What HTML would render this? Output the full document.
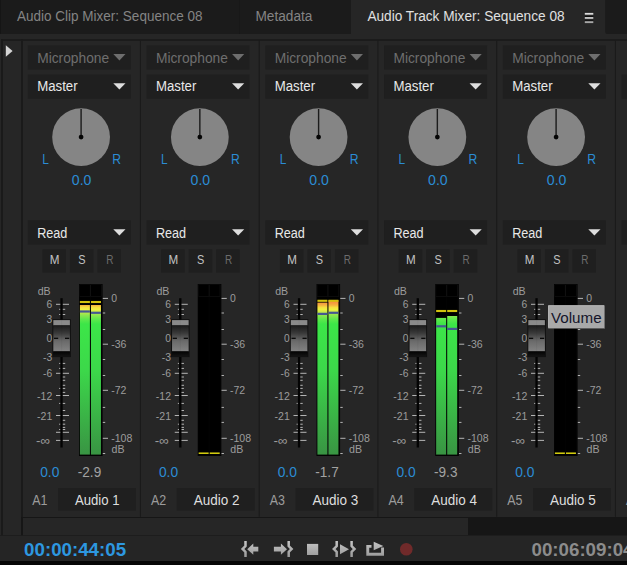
<!DOCTYPE html>
<html><head><meta charset="utf-8"><title>Audio Track Mixer</title>
<style>*{margin:0;padding:0}html,body{width:627px;height:565px;overflow:hidden;background:#262626}svg{display:block;position:absolute;left:0;top:0;font-family:"Liberation Sans",sans-serif}</style></head>
<body>
<svg width="627" height="565" viewBox="0 0 627 565">
<rect x="0" y="0" width="627" height="33.9" fill="#1b1b1b"/>
<rect x="351" y="0" width="258" height="34" fill="#262626"/>
<rect x="605.2" y="-4" width="30" height="37.9" fill="#1b1b1b" rx="2"/>
<rect x="239" y="0" width="1" height="33.9" fill="#181818"/>
<rect x="0" y="0" width="0.8" height="33.9" fill="#151515"/>
<text x="17" y="21" font-size="14" fill="#848484" textLength="185.5" lengthAdjust="spacingAndGlyphs">Audio Clip Mixer: Sequence 08</text>
<text x="255.4" y="21" font-size="14" fill="#848484" textLength="57" lengthAdjust="spacingAndGlyphs">Metadata</text>
<text x="367.4" y="21" font-size="14" fill="#e0e0e0" textLength="197.2" lengthAdjust="spacingAndGlyphs">Audio Track Mixer: Sequence 08</text>
<rect x="584.8" y="11.9" width="8.5" height="1" fill="#0c0c0c"/>
<rect x="584.8" y="12.8" width="8.5" height="1.9" fill="#dadada"/>
<rect x="584.8" y="16.1" width="8.5" height="1" fill="#0c0c0c"/>
<rect x="584.8" y="17" width="8.5" height="1.9" fill="#c0c0c0"/>
<rect x="584.8" y="20.3" width="8.5" height="1" fill="#0c0c0c"/>
<rect x="584.8" y="21.2" width="8.5" height="1.9" fill="#a6a6a6"/>
<rect x="1" y="39.2" width="626" height="1.6" fill="#1a1a1a"/>
<rect x="1" y="39.2" width="2" height="497" fill="#1a1a1a"/>
<rect x="21" y="39.2" width="2" height="497" fill="#1a1a1a"/>
<rect x="21" y="517" width="606" height="18.7" fill="#161616"/>
<rect x="23" y="518" width="445" height="17" fill="#262626"/>
<rect x="0" y="535" width="23" height="0.8" fill="#1a1a1a"/>
<rect x="0" y="535.7" width="627" height="25.5" fill="#252525"/>
<rect x="0" y="561" width="627" height="4" fill="#060606"/>
<path d="M5.8 45.2 L12.6 51 L5.8 56.8 Z" fill="#d4d4d4"/>
<defs>
<linearGradient id="mg" gradientUnits="userSpaceOnUse" x1="0" y1="298" x2="0" y2="455">
<stop offset="0.0000" stop-color="#f07a30"/><stop offset="0.0255" stop-color="#f59040"/><stop offset="0.0446" stop-color="#f5b040"/><stop offset="0.0605" stop-color="#f5e040"/><stop offset="0.0732" stop-color="#eef040"/><stop offset="0.0892" stop-color="#c8e848"/><stop offset="0.1083" stop-color="#90e850"/><stop offset="0.1338" stop-color="#60e84c"/><stop offset="0.1656" stop-color="#3ce648"/><stop offset="0.4586" stop-color="#3cd84a"/><stop offset="0.7771" stop-color="#3ab046"/><stop offset="1.0000" stop-color="#399443"/>
</linearGradient>
<linearGradient id="hg" x1="0" y1="0" x2="0" y2="1">
<stop offset="0" stop-color="#1a1a1a"/><stop offset="0.3" stop-color="#3a3a3a"/><stop offset="0.6" stop-color="#6a6a6a"/><stop offset="1" stop-color="#828282"/>
</linearGradient>
<linearGradient id="hb" x1="0" y1="0" x2="0" y2="1">
<stop offset="0" stop-color="#030303"/><stop offset="1" stop-color="#151515"/>
</linearGradient>
</defs>
<g transform="translate(0.0,0)">
<rect x="139.9" y="40.8" width="1.1" height="476" fill="#1a1a1a"/>
<rect x="27.8" y="45.4" width="103" height="24.2" fill="#1f1f1f"/>
<text x="37.2" y="62.8" font-size="14" fill="#6e6e6e" textLength="72" lengthAdjust="spacingAndGlyphs">Microphone</text>
<path d="M113.3 54 h12.2 l-6.1 6.4 Z" fill="#6e6e6e"/>
<rect x="27.8" y="74.6" width="103" height="24.1" fill="#1f1f1f"/>
<text x="37.2" y="90.8" font-size="14" fill="#e8e8e8" textLength="40.4" lengthAdjust="spacingAndGlyphs">Master</text>
<path d="M113.3 83.2 h12.2 l-6.1 6.4 Z" fill="#dedede"/>
<rect x="27.8" y="220.3" width="103" height="24.3" fill="#1f1f1f"/>
<text x="37.2" y="238" font-size="14" fill="#e8e8e8" textLength="30.2" lengthAdjust="spacingAndGlyphs">Read</text>
<path d="M113.3 229.2 h12.2 l-6.1 6.4 Z" fill="#dedede"/>
<circle cx="81.1" cy="137.1" r="28.9" fill="#858585"/>
<rect x="80.4" y="109" width="1.4" height="28" fill="#1c1c1c"/>
<circle cx="81.1" cy="137.1" r="2.4" fill="#050505"/>
<text x="42.2" y="164" font-size="14" fill="#2b8cd4" textLength="6.6" lengthAdjust="spacingAndGlyphs">L</text>
<text x="112.3" y="164" font-size="14" fill="#2b8cd4" textLength="8.8" lengthAdjust="spacingAndGlyphs">R</text>
<text x="71.8" y="184.8" font-size="14" fill="#2b8cd4" textLength="19.6" lengthAdjust="spacingAndGlyphs">0.0</text>
<rect x="42.4" y="249.3" width="23.6" height="23.3" fill="#1f1f1f"/>
<text x="49.8" y="264.1" font-size="12.6" fill="#c2c2c2" textLength="9.7" lengthAdjust="spacingAndGlyphs">M</text>
<rect x="69.9" y="249.3" width="23.6" height="23.3" fill="#1f1f1f"/>
<text x="78.2" y="264.1" font-size="12.6" fill="#c2c2c2" textLength="7.3" lengthAdjust="spacingAndGlyphs">S</text>
<rect x="97.4" y="249.3" width="23.6" height="23.3" fill="#1f1f1f"/>
<text x="106.2" y="264.1" font-size="12.6" fill="#6c6c6c" textLength="7.2" lengthAdjust="spacingAndGlyphs">R</text>
<text x="37.7" y="294.7" font-size="11" fill="#9c9c9c" textLength="13" lengthAdjust="spacingAndGlyphs">dB</text>
<rect x="60.4" y="298.2" width="2.3" height="149.3" fill="#030303"/>
<rect x="56" y="303.8" width="4.3" height="1" fill="#b4b4b4"/>
<rect x="62.8" y="303.8" width="6.2" height="1" fill="#b4b4b4"/>
<rect x="56" y="372.8" width="4.3" height="1" fill="#b4b4b4"/>
<rect x="62.8" y="372.8" width="6.2" height="1" fill="#b4b4b4"/>
<rect x="56" y="395" width="4.3" height="1" fill="#b4b4b4"/>
<rect x="62.8" y="395" width="6.2" height="1" fill="#b4b4b4"/>
<rect x="56" y="415" width="4.3" height="1" fill="#b4b4b4"/>
<rect x="62.8" y="415" width="6.2" height="1" fill="#b4b4b4"/>
<rect x="56" y="431.8" width="4.3" height="1" fill="#b4b4b4"/>
<rect x="62.8" y="431.8" width="6.2" height="1" fill="#b4b4b4"/>
<rect x="56" y="439.9" width="4.3" height="1" fill="#b4b4b4"/>
<rect x="62.8" y="439.9" width="6.2" height="1" fill="#b4b4b4"/>
<rect x="59.1" y="308.8" width="1.1" height="1" fill="#b4b4b4"/>
<rect x="62.8" y="308.8" width="2.4" height="1" fill="#b4b4b4"/>
<rect x="59.1" y="314" width="1.1" height="1" fill="#b4b4b4"/>
<rect x="62.8" y="314" width="2.4" height="1" fill="#b4b4b4"/>
<rect x="59.1" y="362.9" width="1.1" height="1" fill="#b4b4b4"/>
<rect x="62.8" y="362.9" width="2.4" height="1" fill="#b4b4b4"/>
<rect x="59.1" y="367.9" width="1.1" height="1" fill="#b4b4b4"/>
<rect x="62.8" y="367.9" width="2.4" height="1" fill="#b4b4b4"/>
<rect x="62.8" y="376.5" width="2.4" height="1" fill="#b4b4b4"/>
<rect x="62.8" y="379.8" width="2.4" height="1" fill="#b4b4b4"/>
<rect x="62.8" y="384.8" width="2.4" height="1" fill="#b4b4b4"/>
<rect x="59.1" y="387.9" width="1.1" height="1" fill="#b4b4b4"/>
<rect x="62.8" y="387.9" width="2.4" height="1" fill="#b4b4b4"/>
<rect x="62.8" y="391.9" width="2.4" height="1" fill="#b4b4b4"/>
<rect x="59.1" y="402.9" width="1.1" height="1" fill="#b4b4b4"/>
<rect x="62.8" y="402.9" width="2.4" height="1" fill="#b4b4b4"/>
<rect x="62.8" y="410" width="2.4" height="1" fill="#b4b4b4"/>
<rect x="62.8" y="419.8" width="2.4" height="1" fill="#b4b4b4"/>
<rect x="59.1" y="423.7" width="1.1" height="1" fill="#b4b4b4"/>
<rect x="62.8" y="423.7" width="2.4" height="1" fill="#b4b4b4"/>
<rect x="62.8" y="426.9" width="2.4" height="1" fill="#b4b4b4"/>
<rect x="59.1" y="429" width="1.1" height="1" fill="#b4b4b4"/>
<rect x="62.8" y="429" width="2.4" height="1" fill="#b4b4b4"/>
<text x="46.6" y="308.3" font-size="11" fill="#9c9c9c" textLength="5.7" lengthAdjust="spacingAndGlyphs">6</text>
<text x="46.6" y="323" font-size="11" fill="#9c9c9c" textLength="5.7" lengthAdjust="spacingAndGlyphs">3</text>
<text x="46.6" y="342.3" font-size="11" fill="#9c9c9c" textLength="5.7" lengthAdjust="spacingAndGlyphs">0</text>
<text x="43.1" y="361" font-size="11" fill="#9c9c9c" textLength="9.2" lengthAdjust="spacingAndGlyphs">-3</text>
<text x="43.1" y="377.3" font-size="11" fill="#9c9c9c" textLength="9.2" lengthAdjust="spacingAndGlyphs">-6</text>
<text x="37.1" y="399.5" font-size="11" fill="#9c9c9c" textLength="15.2" lengthAdjust="spacingAndGlyphs">-12</text>
<text x="37.1" y="419.5" font-size="11" fill="#9c9c9c" textLength="15.2" lengthAdjust="spacingAndGlyphs">-21</text>
<text x="36" y="444.6" font-size="13" fill="#9c9c9c" textLength="14" lengthAdjust="spacingAndGlyphs">-∞</text>
<rect x="52.4" y="319.3" width="18.4" height="37.8" fill="#0e0e0e"/>
<rect x="53.3" y="320.1" width="16.6" height="5.3" fill="#8a8a8a"/>
<rect x="53.3" y="325.4" width="16.6" height="26" fill="url(#hg)"/>
<rect x="53.3" y="351.4" width="16.6" height="5.2" fill="url(#hb)"/>
<rect x="61.1" y="320.1" width="1" height="31.3" fill="rgba(0,0,0,0.045)"/>
<rect x="54" y="337.7" width="4.2" height="1.2" fill="#000"/>
<rect x="65" y="337.7" width="4.2" height="1.2" fill="#000"/>
<rect x="79" y="284" width="23.6" height="172" fill="#030303"/>
<rect x="79.6" y="284.6" width="22" height="12" fill="#111111"/>
<rect x="79.9" y="285" width="10" height="11" fill="#000"/>
<rect x="79.9" y="297" width="10" height="157.6" fill="#000"/>
<rect x="79.9" y="305" width="10" height="149.6" fill="url(#mg)"/>
<rect x="79.9" y="300.95" width="10" height="2.1" fill="#d2c20e"/>
<rect x="79.9" y="310.4" width="10" height="2.2" fill="#465892"/>
<rect x="90.95" y="285" width="10" height="11" fill="#000"/>
<rect x="90.95" y="297" width="10" height="157.6" fill="#000"/>
<rect x="90.95" y="305" width="10" height="149.6" fill="url(#mg)"/>
<rect x="90.95" y="300.95" width="10" height="2.1" fill="#d2c20e"/>
<rect x="90.95" y="311.7" width="10" height="2.2" fill="#465892"/>
<rect x="102.8" y="297.9" width="5.2" height="1" fill="#b4b4b4"/>
<text x="111.2" y="302.4" font-size="11" fill="#9c9c9c" textLength="5.8" lengthAdjust="spacingAndGlyphs">0</text>
<rect x="102.8" y="343.7" width="5.2" height="1" fill="#b4b4b4"/>
<text x="111.2" y="348.2" font-size="11" fill="#9c9c9c" textLength="15.2" lengthAdjust="spacingAndGlyphs">-36</text>
<rect x="102.8" y="389.8" width="5.2" height="1" fill="#b4b4b4"/>
<text x="111.2" y="394.3" font-size="11" fill="#9c9c9c" textLength="15.2" lengthAdjust="spacingAndGlyphs">-72</text>
<rect x="102.8" y="437.8" width="5.2" height="1" fill="#b4b4b4"/>
<text x="111.2" y="442.3" font-size="11" fill="#9c9c9c" textLength="21.2" lengthAdjust="spacingAndGlyphs">-108</text>
<rect x="102.8" y="312.5" width="2.4" height="1" fill="#b4b4b4"/>
<rect x="102.8" y="329" width="2.4" height="1" fill="#b4b4b4"/>
<rect x="102.8" y="359" width="2.4" height="1" fill="#b4b4b4"/>
<rect x="102.8" y="375" width="2.4" height="1" fill="#b4b4b4"/>
<rect x="102.8" y="406.9" width="2.4" height="1" fill="#b4b4b4"/>
<rect x="102.8" y="421.9" width="2.4" height="1" fill="#b4b4b4"/>
<rect x="102.8" y="453" width="2.4" height="1" fill="#b4b4b4"/>
<text x="111.5" y="453" font-size="11" fill="#9c9c9c" textLength="13" lengthAdjust="spacingAndGlyphs">dB</text>
<text x="40.2" y="477.1" font-size="14" fill="#2b8cd4" textLength="19.2" lengthAdjust="spacingAndGlyphs">0.0</text>
<text x="77.8" y="477.1" font-size="14" fill="#a2a2a2" textLength="23.4" lengthAdjust="spacingAndGlyphs">-2.9</text>
<text x="32.3" y="504.9" font-size="14" fill="#9c9c9c" textLength="15.2" lengthAdjust="spacingAndGlyphs">A1</text>
<rect x="58" y="488" width="78" height="22.6" fill="#1f1f1f"/>
<text x="74.9" y="504.9" font-size="14" fill="#dedede" textLength="44.7" lengthAdjust="spacingAndGlyphs">Audio 1</text>
</g>
<g transform="translate(118.75,0)">
<rect x="139.9" y="40.8" width="1.1" height="476" fill="#1a1a1a"/>
<rect x="27.8" y="45.4" width="103" height="24.2" fill="#1f1f1f"/>
<text x="37.2" y="62.8" font-size="14" fill="#6e6e6e" textLength="72" lengthAdjust="spacingAndGlyphs">Microphone</text>
<path d="M113.3 54 h12.2 l-6.1 6.4 Z" fill="#6e6e6e"/>
<rect x="27.8" y="74.6" width="103" height="24.1" fill="#1f1f1f"/>
<text x="37.2" y="90.8" font-size="14" fill="#e8e8e8" textLength="40.4" lengthAdjust="spacingAndGlyphs">Master</text>
<path d="M113.3 83.2 h12.2 l-6.1 6.4 Z" fill="#dedede"/>
<rect x="27.8" y="220.3" width="103" height="24.3" fill="#1f1f1f"/>
<text x="37.2" y="238" font-size="14" fill="#e8e8e8" textLength="30.2" lengthAdjust="spacingAndGlyphs">Read</text>
<path d="M113.3 229.2 h12.2 l-6.1 6.4 Z" fill="#dedede"/>
<circle cx="81.1" cy="137.1" r="28.9" fill="#858585"/>
<rect x="80.4" y="109" width="1.4" height="28" fill="#1c1c1c"/>
<circle cx="81.1" cy="137.1" r="2.4" fill="#050505"/>
<text x="42.2" y="164" font-size="14" fill="#2b8cd4" textLength="6.6" lengthAdjust="spacingAndGlyphs">L</text>
<text x="112.3" y="164" font-size="14" fill="#2b8cd4" textLength="8.8" lengthAdjust="spacingAndGlyphs">R</text>
<text x="71.8" y="184.8" font-size="14" fill="#2b8cd4" textLength="19.6" lengthAdjust="spacingAndGlyphs">0.0</text>
<rect x="42.4" y="249.3" width="23.6" height="23.3" fill="#1f1f1f"/>
<text x="49.8" y="264.1" font-size="12.6" fill="#c2c2c2" textLength="9.7" lengthAdjust="spacingAndGlyphs">M</text>
<rect x="69.9" y="249.3" width="23.6" height="23.3" fill="#1f1f1f"/>
<text x="78.2" y="264.1" font-size="12.6" fill="#c2c2c2" textLength="7.3" lengthAdjust="spacingAndGlyphs">S</text>
<rect x="97.4" y="249.3" width="23.6" height="23.3" fill="#1f1f1f"/>
<text x="106.2" y="264.1" font-size="12.6" fill="#6c6c6c" textLength="7.2" lengthAdjust="spacingAndGlyphs">R</text>
<text x="37.7" y="294.7" font-size="11" fill="#9c9c9c" textLength="13" lengthAdjust="spacingAndGlyphs">dB</text>
<rect x="60.4" y="298.2" width="2.3" height="149.3" fill="#030303"/>
<rect x="56" y="303.8" width="4.3" height="1" fill="#b4b4b4"/>
<rect x="62.8" y="303.8" width="6.2" height="1" fill="#b4b4b4"/>
<rect x="56" y="372.8" width="4.3" height="1" fill="#b4b4b4"/>
<rect x="62.8" y="372.8" width="6.2" height="1" fill="#b4b4b4"/>
<rect x="56" y="395" width="4.3" height="1" fill="#b4b4b4"/>
<rect x="62.8" y="395" width="6.2" height="1" fill="#b4b4b4"/>
<rect x="56" y="415" width="4.3" height="1" fill="#b4b4b4"/>
<rect x="62.8" y="415" width="6.2" height="1" fill="#b4b4b4"/>
<rect x="56" y="431.8" width="4.3" height="1" fill="#b4b4b4"/>
<rect x="62.8" y="431.8" width="6.2" height="1" fill="#b4b4b4"/>
<rect x="56" y="439.9" width="4.3" height="1" fill="#b4b4b4"/>
<rect x="62.8" y="439.9" width="6.2" height="1" fill="#b4b4b4"/>
<rect x="59.1" y="308.8" width="1.1" height="1" fill="#b4b4b4"/>
<rect x="62.8" y="308.8" width="2.4" height="1" fill="#b4b4b4"/>
<rect x="59.1" y="314" width="1.1" height="1" fill="#b4b4b4"/>
<rect x="62.8" y="314" width="2.4" height="1" fill="#b4b4b4"/>
<rect x="59.1" y="362.9" width="1.1" height="1" fill="#b4b4b4"/>
<rect x="62.8" y="362.9" width="2.4" height="1" fill="#b4b4b4"/>
<rect x="59.1" y="367.9" width="1.1" height="1" fill="#b4b4b4"/>
<rect x="62.8" y="367.9" width="2.4" height="1" fill="#b4b4b4"/>
<rect x="62.8" y="376.5" width="2.4" height="1" fill="#b4b4b4"/>
<rect x="62.8" y="379.8" width="2.4" height="1" fill="#b4b4b4"/>
<rect x="62.8" y="384.8" width="2.4" height="1" fill="#b4b4b4"/>
<rect x="59.1" y="387.9" width="1.1" height="1" fill="#b4b4b4"/>
<rect x="62.8" y="387.9" width="2.4" height="1" fill="#b4b4b4"/>
<rect x="62.8" y="391.9" width="2.4" height="1" fill="#b4b4b4"/>
<rect x="59.1" y="402.9" width="1.1" height="1" fill="#b4b4b4"/>
<rect x="62.8" y="402.9" width="2.4" height="1" fill="#b4b4b4"/>
<rect x="62.8" y="410" width="2.4" height="1" fill="#b4b4b4"/>
<rect x="62.8" y="419.8" width="2.4" height="1" fill="#b4b4b4"/>
<rect x="59.1" y="423.7" width="1.1" height="1" fill="#b4b4b4"/>
<rect x="62.8" y="423.7" width="2.4" height="1" fill="#b4b4b4"/>
<rect x="62.8" y="426.9" width="2.4" height="1" fill="#b4b4b4"/>
<rect x="59.1" y="429" width="1.1" height="1" fill="#b4b4b4"/>
<rect x="62.8" y="429" width="2.4" height="1" fill="#b4b4b4"/>
<text x="46.6" y="308.3" font-size="11" fill="#9c9c9c" textLength="5.7" lengthAdjust="spacingAndGlyphs">6</text>
<text x="46.6" y="323" font-size="11" fill="#9c9c9c" textLength="5.7" lengthAdjust="spacingAndGlyphs">3</text>
<text x="46.6" y="342.3" font-size="11" fill="#9c9c9c" textLength="5.7" lengthAdjust="spacingAndGlyphs">0</text>
<text x="43.1" y="361" font-size="11" fill="#9c9c9c" textLength="9.2" lengthAdjust="spacingAndGlyphs">-3</text>
<text x="43.1" y="377.3" font-size="11" fill="#9c9c9c" textLength="9.2" lengthAdjust="spacingAndGlyphs">-6</text>
<text x="37.1" y="399.5" font-size="11" fill="#9c9c9c" textLength="15.2" lengthAdjust="spacingAndGlyphs">-12</text>
<text x="37.1" y="419.5" font-size="11" fill="#9c9c9c" textLength="15.2" lengthAdjust="spacingAndGlyphs">-21</text>
<text x="36" y="444.6" font-size="13" fill="#9c9c9c" textLength="14" lengthAdjust="spacingAndGlyphs">-∞</text>
<rect x="52.4" y="319.3" width="18.4" height="37.8" fill="#0e0e0e"/>
<rect x="53.3" y="320.1" width="16.6" height="5.3" fill="#8a8a8a"/>
<rect x="53.3" y="325.4" width="16.6" height="26" fill="url(#hg)"/>
<rect x="53.3" y="351.4" width="16.6" height="5.2" fill="url(#hb)"/>
<rect x="61.1" y="320.1" width="1" height="31.3" fill="rgba(0,0,0,0.045)"/>
<rect x="54" y="337.7" width="4.2" height="1.2" fill="#000"/>
<rect x="65" y="337.7" width="4.2" height="1.2" fill="#000"/>
<rect x="79" y="284" width="23.6" height="172" fill="#030303"/>
<rect x="79.6" y="284.6" width="22" height="12" fill="#111111"/>
<rect x="79.9" y="285" width="10" height="11" fill="#000"/>
<rect x="79.9" y="297" width="10" height="157.6" fill="#000"/>
<rect x="79.9" y="452.5" width="10" height="1.4" fill="#e8e010"/>
<rect x="90.95" y="285" width="10" height="11" fill="#000"/>
<rect x="90.95" y="297" width="10" height="157.6" fill="#000"/>
<rect x="90.95" y="452.5" width="10" height="1.4" fill="#e8e010"/>
<rect x="102.8" y="297.9" width="5.2" height="1" fill="#b4b4b4"/>
<text x="111.2" y="302.4" font-size="11" fill="#9c9c9c" textLength="5.8" lengthAdjust="spacingAndGlyphs">0</text>
<rect x="102.8" y="343.7" width="5.2" height="1" fill="#b4b4b4"/>
<text x="111.2" y="348.2" font-size="11" fill="#9c9c9c" textLength="15.2" lengthAdjust="spacingAndGlyphs">-36</text>
<rect x="102.8" y="389.8" width="5.2" height="1" fill="#b4b4b4"/>
<text x="111.2" y="394.3" font-size="11" fill="#9c9c9c" textLength="15.2" lengthAdjust="spacingAndGlyphs">-72</text>
<rect x="102.8" y="437.8" width="5.2" height="1" fill="#b4b4b4"/>
<text x="111.2" y="442.3" font-size="11" fill="#9c9c9c" textLength="21.2" lengthAdjust="spacingAndGlyphs">-108</text>
<rect x="102.8" y="312.5" width="2.4" height="1" fill="#b4b4b4"/>
<rect x="102.8" y="329" width="2.4" height="1" fill="#b4b4b4"/>
<rect x="102.8" y="359" width="2.4" height="1" fill="#b4b4b4"/>
<rect x="102.8" y="375" width="2.4" height="1" fill="#b4b4b4"/>
<rect x="102.8" y="406.9" width="2.4" height="1" fill="#b4b4b4"/>
<rect x="102.8" y="421.9" width="2.4" height="1" fill="#b4b4b4"/>
<rect x="102.8" y="453" width="2.4" height="1" fill="#b4b4b4"/>
<text x="111.5" y="453" font-size="11" fill="#9c9c9c" textLength="13" lengthAdjust="spacingAndGlyphs">dB</text>
<text x="40.2" y="477.1" font-size="14" fill="#2b8cd4" textLength="19.2" lengthAdjust="spacingAndGlyphs">0.0</text>
<text x="32.3" y="504.9" font-size="14" fill="#9c9c9c" textLength="15.2" lengthAdjust="spacingAndGlyphs">A2</text>
<rect x="58" y="488" width="78" height="22.6" fill="#1f1f1f"/>
<text x="74.9" y="504.9" font-size="14" fill="#dedede" textLength="45.8" lengthAdjust="spacingAndGlyphs">Audio 2</text>
</g>
<g transform="translate(237.5,0)">
<rect x="139.9" y="40.8" width="1.1" height="476" fill="#1a1a1a"/>
<rect x="27.8" y="45.4" width="103" height="24.2" fill="#1f1f1f"/>
<text x="37.2" y="62.8" font-size="14" fill="#6e6e6e" textLength="72" lengthAdjust="spacingAndGlyphs">Microphone</text>
<path d="M113.3 54 h12.2 l-6.1 6.4 Z" fill="#6e6e6e"/>
<rect x="27.8" y="74.6" width="103" height="24.1" fill="#1f1f1f"/>
<text x="37.2" y="90.8" font-size="14" fill="#e8e8e8" textLength="40.4" lengthAdjust="spacingAndGlyphs">Master</text>
<path d="M113.3 83.2 h12.2 l-6.1 6.4 Z" fill="#dedede"/>
<rect x="27.8" y="220.3" width="103" height="24.3" fill="#1f1f1f"/>
<text x="37.2" y="238" font-size="14" fill="#e8e8e8" textLength="30.2" lengthAdjust="spacingAndGlyphs">Read</text>
<path d="M113.3 229.2 h12.2 l-6.1 6.4 Z" fill="#dedede"/>
<circle cx="81.1" cy="137.1" r="28.9" fill="#858585"/>
<rect x="80.4" y="109" width="1.4" height="28" fill="#1c1c1c"/>
<circle cx="81.1" cy="137.1" r="2.4" fill="#050505"/>
<text x="42.2" y="164" font-size="14" fill="#2b8cd4" textLength="6.6" lengthAdjust="spacingAndGlyphs">L</text>
<text x="112.3" y="164" font-size="14" fill="#2b8cd4" textLength="8.8" lengthAdjust="spacingAndGlyphs">R</text>
<text x="71.8" y="184.8" font-size="14" fill="#2b8cd4" textLength="19.6" lengthAdjust="spacingAndGlyphs">0.0</text>
<rect x="42.4" y="249.3" width="23.6" height="23.3" fill="#1f1f1f"/>
<text x="49.8" y="264.1" font-size="12.6" fill="#c2c2c2" textLength="9.7" lengthAdjust="spacingAndGlyphs">M</text>
<rect x="69.9" y="249.3" width="23.6" height="23.3" fill="#1f1f1f"/>
<text x="78.2" y="264.1" font-size="12.6" fill="#c2c2c2" textLength="7.3" lengthAdjust="spacingAndGlyphs">S</text>
<rect x="97.4" y="249.3" width="23.6" height="23.3" fill="#1f1f1f"/>
<text x="106.2" y="264.1" font-size="12.6" fill="#6c6c6c" textLength="7.2" lengthAdjust="spacingAndGlyphs">R</text>
<text x="37.7" y="294.7" font-size="11" fill="#9c9c9c" textLength="13" lengthAdjust="spacingAndGlyphs">dB</text>
<rect x="60.4" y="298.2" width="2.3" height="149.3" fill="#030303"/>
<rect x="56" y="303.8" width="4.3" height="1" fill="#b4b4b4"/>
<rect x="62.8" y="303.8" width="6.2" height="1" fill="#b4b4b4"/>
<rect x="56" y="372.8" width="4.3" height="1" fill="#b4b4b4"/>
<rect x="62.8" y="372.8" width="6.2" height="1" fill="#b4b4b4"/>
<rect x="56" y="395" width="4.3" height="1" fill="#b4b4b4"/>
<rect x="62.8" y="395" width="6.2" height="1" fill="#b4b4b4"/>
<rect x="56" y="415" width="4.3" height="1" fill="#b4b4b4"/>
<rect x="62.8" y="415" width="6.2" height="1" fill="#b4b4b4"/>
<rect x="56" y="431.8" width="4.3" height="1" fill="#b4b4b4"/>
<rect x="62.8" y="431.8" width="6.2" height="1" fill="#b4b4b4"/>
<rect x="56" y="439.9" width="4.3" height="1" fill="#b4b4b4"/>
<rect x="62.8" y="439.9" width="6.2" height="1" fill="#b4b4b4"/>
<rect x="59.1" y="308.8" width="1.1" height="1" fill="#b4b4b4"/>
<rect x="62.8" y="308.8" width="2.4" height="1" fill="#b4b4b4"/>
<rect x="59.1" y="314" width="1.1" height="1" fill="#b4b4b4"/>
<rect x="62.8" y="314" width="2.4" height="1" fill="#b4b4b4"/>
<rect x="59.1" y="362.9" width="1.1" height="1" fill="#b4b4b4"/>
<rect x="62.8" y="362.9" width="2.4" height="1" fill="#b4b4b4"/>
<rect x="59.1" y="367.9" width="1.1" height="1" fill="#b4b4b4"/>
<rect x="62.8" y="367.9" width="2.4" height="1" fill="#b4b4b4"/>
<rect x="62.8" y="376.5" width="2.4" height="1" fill="#b4b4b4"/>
<rect x="62.8" y="379.8" width="2.4" height="1" fill="#b4b4b4"/>
<rect x="62.8" y="384.8" width="2.4" height="1" fill="#b4b4b4"/>
<rect x="59.1" y="387.9" width="1.1" height="1" fill="#b4b4b4"/>
<rect x="62.8" y="387.9" width="2.4" height="1" fill="#b4b4b4"/>
<rect x="62.8" y="391.9" width="2.4" height="1" fill="#b4b4b4"/>
<rect x="59.1" y="402.9" width="1.1" height="1" fill="#b4b4b4"/>
<rect x="62.8" y="402.9" width="2.4" height="1" fill="#b4b4b4"/>
<rect x="62.8" y="410" width="2.4" height="1" fill="#b4b4b4"/>
<rect x="62.8" y="419.8" width="2.4" height="1" fill="#b4b4b4"/>
<rect x="59.1" y="423.7" width="1.1" height="1" fill="#b4b4b4"/>
<rect x="62.8" y="423.7" width="2.4" height="1" fill="#b4b4b4"/>
<rect x="62.8" y="426.9" width="2.4" height="1" fill="#b4b4b4"/>
<rect x="59.1" y="429" width="1.1" height="1" fill="#b4b4b4"/>
<rect x="62.8" y="429" width="2.4" height="1" fill="#b4b4b4"/>
<text x="46.6" y="308.3" font-size="11" fill="#9c9c9c" textLength="5.7" lengthAdjust="spacingAndGlyphs">6</text>
<text x="46.6" y="323" font-size="11" fill="#9c9c9c" textLength="5.7" lengthAdjust="spacingAndGlyphs">3</text>
<text x="46.6" y="342.3" font-size="11" fill="#9c9c9c" textLength="5.7" lengthAdjust="spacingAndGlyphs">0</text>
<text x="43.1" y="361" font-size="11" fill="#9c9c9c" textLength="9.2" lengthAdjust="spacingAndGlyphs">-3</text>
<text x="43.1" y="377.3" font-size="11" fill="#9c9c9c" textLength="9.2" lengthAdjust="spacingAndGlyphs">-6</text>
<text x="37.1" y="399.5" font-size="11" fill="#9c9c9c" textLength="15.2" lengthAdjust="spacingAndGlyphs">-12</text>
<text x="37.1" y="419.5" font-size="11" fill="#9c9c9c" textLength="15.2" lengthAdjust="spacingAndGlyphs">-21</text>
<text x="36" y="444.6" font-size="13" fill="#9c9c9c" textLength="14" lengthAdjust="spacingAndGlyphs">-∞</text>
<rect x="52.4" y="319.3" width="18.4" height="37.8" fill="#0e0e0e"/>
<rect x="53.3" y="320.1" width="16.6" height="5.3" fill="#8a8a8a"/>
<rect x="53.3" y="325.4" width="16.6" height="26" fill="url(#hg)"/>
<rect x="53.3" y="351.4" width="16.6" height="5.2" fill="url(#hb)"/>
<rect x="61.1" y="320.1" width="1" height="31.3" fill="rgba(0,0,0,0.045)"/>
<rect x="54" y="337.7" width="4.2" height="1.2" fill="#000"/>
<rect x="65" y="337.7" width="4.2" height="1.2" fill="#000"/>
<rect x="79" y="284" width="23.6" height="172" fill="#030303"/>
<rect x="79.6" y="284.6" width="22" height="12" fill="#111111"/>
<rect x="79.9" y="285" width="10" height="11" fill="#000"/>
<rect x="79.9" y="297" width="10" height="157.6" fill="#000"/>
<rect x="79.9" y="302.6" width="10" height="152" fill="url(#mg)"/>
<rect x="79.9" y="299.75" width="10" height="2.1" fill="#d2c20e"/>
<rect x="79.9" y="312.8" width="10" height="2.2" fill="#465892"/>
<rect x="90.95" y="285" width="10" height="11" fill="#000"/>
<rect x="90.95" y="297" width="10" height="157.6" fill="#000"/>
<rect x="90.95" y="300.2" width="10" height="154.4" fill="url(#mg)"/>
<rect x="90.95" y="299.75" width="10" height="2.1" fill="#d2c20e"/>
<rect x="90.95" y="311.7" width="10" height="2.2" fill="#465892"/>
<rect x="102.8" y="297.9" width="5.2" height="1" fill="#b4b4b4"/>
<text x="111.2" y="302.4" font-size="11" fill="#9c9c9c" textLength="5.8" lengthAdjust="spacingAndGlyphs">0</text>
<rect x="102.8" y="343.7" width="5.2" height="1" fill="#b4b4b4"/>
<text x="111.2" y="348.2" font-size="11" fill="#9c9c9c" textLength="15.2" lengthAdjust="spacingAndGlyphs">-36</text>
<rect x="102.8" y="389.8" width="5.2" height="1" fill="#b4b4b4"/>
<text x="111.2" y="394.3" font-size="11" fill="#9c9c9c" textLength="15.2" lengthAdjust="spacingAndGlyphs">-72</text>
<rect x="102.8" y="437.8" width="5.2" height="1" fill="#b4b4b4"/>
<text x="111.2" y="442.3" font-size="11" fill="#9c9c9c" textLength="21.2" lengthAdjust="spacingAndGlyphs">-108</text>
<rect x="102.8" y="312.5" width="2.4" height="1" fill="#b4b4b4"/>
<rect x="102.8" y="329" width="2.4" height="1" fill="#b4b4b4"/>
<rect x="102.8" y="359" width="2.4" height="1" fill="#b4b4b4"/>
<rect x="102.8" y="375" width="2.4" height="1" fill="#b4b4b4"/>
<rect x="102.8" y="406.9" width="2.4" height="1" fill="#b4b4b4"/>
<rect x="102.8" y="421.9" width="2.4" height="1" fill="#b4b4b4"/>
<rect x="102.8" y="453" width="2.4" height="1" fill="#b4b4b4"/>
<text x="111.5" y="453" font-size="11" fill="#9c9c9c" textLength="13" lengthAdjust="spacingAndGlyphs">dB</text>
<text x="40.2" y="477.1" font-size="14" fill="#2b8cd4" textLength="19.2" lengthAdjust="spacingAndGlyphs">0.0</text>
<text x="77.8" y="477.1" font-size="14" fill="#a2a2a2" textLength="23.4" lengthAdjust="spacingAndGlyphs">-1.7</text>
<text x="32.3" y="504.9" font-size="14" fill="#9c9c9c" textLength="15.2" lengthAdjust="spacingAndGlyphs">A3</text>
<rect x="58" y="488" width="78" height="22.6" fill="#1f1f1f"/>
<text x="74.9" y="504.9" font-size="14" fill="#dedede" textLength="45.8" lengthAdjust="spacingAndGlyphs">Audio 3</text>
</g>
<g transform="translate(356.25,0)">
<rect x="139.9" y="40.8" width="1.1" height="476" fill="#1a1a1a"/>
<rect x="27.8" y="45.4" width="103" height="24.2" fill="#1f1f1f"/>
<text x="37.2" y="62.8" font-size="14" fill="#6e6e6e" textLength="72" lengthAdjust="spacingAndGlyphs">Microphone</text>
<path d="M113.3 54 h12.2 l-6.1 6.4 Z" fill="#6e6e6e"/>
<rect x="27.8" y="74.6" width="103" height="24.1" fill="#1f1f1f"/>
<text x="37.2" y="90.8" font-size="14" fill="#e8e8e8" textLength="40.4" lengthAdjust="spacingAndGlyphs">Master</text>
<path d="M113.3 83.2 h12.2 l-6.1 6.4 Z" fill="#dedede"/>
<rect x="27.8" y="220.3" width="103" height="24.3" fill="#1f1f1f"/>
<text x="37.2" y="238" font-size="14" fill="#e8e8e8" textLength="30.2" lengthAdjust="spacingAndGlyphs">Read</text>
<path d="M113.3 229.2 h12.2 l-6.1 6.4 Z" fill="#dedede"/>
<circle cx="81.1" cy="137.1" r="28.9" fill="#858585"/>
<rect x="80.4" y="109" width="1.4" height="28" fill="#1c1c1c"/>
<circle cx="81.1" cy="137.1" r="2.4" fill="#050505"/>
<text x="42.2" y="164" font-size="14" fill="#2b8cd4" textLength="6.6" lengthAdjust="spacingAndGlyphs">L</text>
<text x="112.3" y="164" font-size="14" fill="#2b8cd4" textLength="8.8" lengthAdjust="spacingAndGlyphs">R</text>
<text x="71.8" y="184.8" font-size="14" fill="#2b8cd4" textLength="19.6" lengthAdjust="spacingAndGlyphs">0.0</text>
<rect x="42.4" y="249.3" width="23.6" height="23.3" fill="#1f1f1f"/>
<text x="49.8" y="264.1" font-size="12.6" fill="#c2c2c2" textLength="9.7" lengthAdjust="spacingAndGlyphs">M</text>
<rect x="69.9" y="249.3" width="23.6" height="23.3" fill="#1f1f1f"/>
<text x="78.2" y="264.1" font-size="12.6" fill="#c2c2c2" textLength="7.3" lengthAdjust="spacingAndGlyphs">S</text>
<rect x="97.4" y="249.3" width="23.6" height="23.3" fill="#1f1f1f"/>
<text x="106.2" y="264.1" font-size="12.6" fill="#6c6c6c" textLength="7.2" lengthAdjust="spacingAndGlyphs">R</text>
<text x="37.7" y="294.7" font-size="11" fill="#9c9c9c" textLength="13" lengthAdjust="spacingAndGlyphs">dB</text>
<rect x="60.4" y="298.2" width="2.3" height="149.3" fill="#030303"/>
<rect x="56" y="303.8" width="4.3" height="1" fill="#b4b4b4"/>
<rect x="62.8" y="303.8" width="6.2" height="1" fill="#b4b4b4"/>
<rect x="56" y="372.8" width="4.3" height="1" fill="#b4b4b4"/>
<rect x="62.8" y="372.8" width="6.2" height="1" fill="#b4b4b4"/>
<rect x="56" y="395" width="4.3" height="1" fill="#b4b4b4"/>
<rect x="62.8" y="395" width="6.2" height="1" fill="#b4b4b4"/>
<rect x="56" y="415" width="4.3" height="1" fill="#b4b4b4"/>
<rect x="62.8" y="415" width="6.2" height="1" fill="#b4b4b4"/>
<rect x="56" y="431.8" width="4.3" height="1" fill="#b4b4b4"/>
<rect x="62.8" y="431.8" width="6.2" height="1" fill="#b4b4b4"/>
<rect x="56" y="439.9" width="4.3" height="1" fill="#b4b4b4"/>
<rect x="62.8" y="439.9" width="6.2" height="1" fill="#b4b4b4"/>
<rect x="59.1" y="308.8" width="1.1" height="1" fill="#b4b4b4"/>
<rect x="62.8" y="308.8" width="2.4" height="1" fill="#b4b4b4"/>
<rect x="59.1" y="314" width="1.1" height="1" fill="#b4b4b4"/>
<rect x="62.8" y="314" width="2.4" height="1" fill="#b4b4b4"/>
<rect x="59.1" y="362.9" width="1.1" height="1" fill="#b4b4b4"/>
<rect x="62.8" y="362.9" width="2.4" height="1" fill="#b4b4b4"/>
<rect x="59.1" y="367.9" width="1.1" height="1" fill="#b4b4b4"/>
<rect x="62.8" y="367.9" width="2.4" height="1" fill="#b4b4b4"/>
<rect x="62.8" y="376.5" width="2.4" height="1" fill="#b4b4b4"/>
<rect x="62.8" y="379.8" width="2.4" height="1" fill="#b4b4b4"/>
<rect x="62.8" y="384.8" width="2.4" height="1" fill="#b4b4b4"/>
<rect x="59.1" y="387.9" width="1.1" height="1" fill="#b4b4b4"/>
<rect x="62.8" y="387.9" width="2.4" height="1" fill="#b4b4b4"/>
<rect x="62.8" y="391.9" width="2.4" height="1" fill="#b4b4b4"/>
<rect x="59.1" y="402.9" width="1.1" height="1" fill="#b4b4b4"/>
<rect x="62.8" y="402.9" width="2.4" height="1" fill="#b4b4b4"/>
<rect x="62.8" y="410" width="2.4" height="1" fill="#b4b4b4"/>
<rect x="62.8" y="419.8" width="2.4" height="1" fill="#b4b4b4"/>
<rect x="59.1" y="423.7" width="1.1" height="1" fill="#b4b4b4"/>
<rect x="62.8" y="423.7" width="2.4" height="1" fill="#b4b4b4"/>
<rect x="62.8" y="426.9" width="2.4" height="1" fill="#b4b4b4"/>
<rect x="59.1" y="429" width="1.1" height="1" fill="#b4b4b4"/>
<rect x="62.8" y="429" width="2.4" height="1" fill="#b4b4b4"/>
<text x="46.6" y="308.3" font-size="11" fill="#9c9c9c" textLength="5.7" lengthAdjust="spacingAndGlyphs">6</text>
<text x="46.6" y="323" font-size="11" fill="#9c9c9c" textLength="5.7" lengthAdjust="spacingAndGlyphs">3</text>
<text x="46.6" y="342.3" font-size="11" fill="#9c9c9c" textLength="5.7" lengthAdjust="spacingAndGlyphs">0</text>
<text x="43.1" y="361" font-size="11" fill="#9c9c9c" textLength="9.2" lengthAdjust="spacingAndGlyphs">-3</text>
<text x="43.1" y="377.3" font-size="11" fill="#9c9c9c" textLength="9.2" lengthAdjust="spacingAndGlyphs">-6</text>
<text x="37.1" y="399.5" font-size="11" fill="#9c9c9c" textLength="15.2" lengthAdjust="spacingAndGlyphs">-12</text>
<text x="37.1" y="419.5" font-size="11" fill="#9c9c9c" textLength="15.2" lengthAdjust="spacingAndGlyphs">-21</text>
<text x="36" y="444.6" font-size="13" fill="#9c9c9c" textLength="14" lengthAdjust="spacingAndGlyphs">-∞</text>
<rect x="52.4" y="319.3" width="18.4" height="37.8" fill="#0e0e0e"/>
<rect x="53.3" y="320.1" width="16.6" height="5.3" fill="#8a8a8a"/>
<rect x="53.3" y="325.4" width="16.6" height="26" fill="url(#hg)"/>
<rect x="53.3" y="351.4" width="16.6" height="5.2" fill="url(#hb)"/>
<rect x="61.1" y="320.1" width="1" height="31.3" fill="rgba(0,0,0,0.045)"/>
<rect x="54" y="337.7" width="4.2" height="1.2" fill="#000"/>
<rect x="65" y="337.7" width="4.2" height="1.2" fill="#000"/>
<rect x="79" y="284" width="23.6" height="172" fill="#030303"/>
<rect x="79.6" y="284.6" width="22" height="12" fill="#111111"/>
<rect x="79.9" y="285" width="10" height="11" fill="#000"/>
<rect x="79.9" y="297" width="10" height="157.6" fill="#000"/>
<rect x="79.9" y="317.9" width="10" height="136.7" fill="url(#mg)"/>
<rect x="79.9" y="309.95" width="10" height="2.1" fill="#d2c20e"/>
<rect x="79.9" y="325.2" width="10" height="2.2" fill="#465892"/>
<rect x="90.95" y="285" width="10" height="11" fill="#000"/>
<rect x="90.95" y="297" width="10" height="157.6" fill="#000"/>
<rect x="90.95" y="316" width="10" height="138.6" fill="url(#mg)"/>
<rect x="90.95" y="309.95" width="10" height="2.1" fill="#d2c20e"/>
<rect x="90.95" y="327.8" width="10" height="2.2" fill="#465892"/>
<rect x="102.8" y="297.9" width="5.2" height="1" fill="#b4b4b4"/>
<text x="111.2" y="302.4" font-size="11" fill="#9c9c9c" textLength="5.8" lengthAdjust="spacingAndGlyphs">0</text>
<rect x="102.8" y="343.7" width="5.2" height="1" fill="#b4b4b4"/>
<text x="111.2" y="348.2" font-size="11" fill="#9c9c9c" textLength="15.2" lengthAdjust="spacingAndGlyphs">-36</text>
<rect x="102.8" y="389.8" width="5.2" height="1" fill="#b4b4b4"/>
<text x="111.2" y="394.3" font-size="11" fill="#9c9c9c" textLength="15.2" lengthAdjust="spacingAndGlyphs">-72</text>
<rect x="102.8" y="437.8" width="5.2" height="1" fill="#b4b4b4"/>
<text x="111.2" y="442.3" font-size="11" fill="#9c9c9c" textLength="21.2" lengthAdjust="spacingAndGlyphs">-108</text>
<rect x="102.8" y="312.5" width="2.4" height="1" fill="#b4b4b4"/>
<rect x="102.8" y="329" width="2.4" height="1" fill="#b4b4b4"/>
<rect x="102.8" y="359" width="2.4" height="1" fill="#b4b4b4"/>
<rect x="102.8" y="375" width="2.4" height="1" fill="#b4b4b4"/>
<rect x="102.8" y="406.9" width="2.4" height="1" fill="#b4b4b4"/>
<rect x="102.8" y="421.9" width="2.4" height="1" fill="#b4b4b4"/>
<rect x="102.8" y="453" width="2.4" height="1" fill="#b4b4b4"/>
<text x="111.5" y="453" font-size="11" fill="#9c9c9c" textLength="13" lengthAdjust="spacingAndGlyphs">dB</text>
<text x="40.2" y="477.1" font-size="14" fill="#2b8cd4" textLength="19.2" lengthAdjust="spacingAndGlyphs">0.0</text>
<text x="77.8" y="477.1" font-size="14" fill="#a2a2a2" textLength="23.4" lengthAdjust="spacingAndGlyphs">-9.3</text>
<text x="32.3" y="504.9" font-size="14" fill="#9c9c9c" textLength="15.2" lengthAdjust="spacingAndGlyphs">A4</text>
<rect x="58" y="488" width="78" height="22.6" fill="#1f1f1f"/>
<text x="74.9" y="504.9" font-size="14" fill="#dedede" textLength="45.8" lengthAdjust="spacingAndGlyphs">Audio 4</text>
</g>
<g transform="translate(475.0,0)">
<rect x="139.9" y="40.8" width="1.1" height="476" fill="#1a1a1a"/>
<rect x="27.8" y="45.4" width="103" height="24.2" fill="#1f1f1f"/>
<text x="37.2" y="62.8" font-size="14" fill="#6e6e6e" textLength="72" lengthAdjust="spacingAndGlyphs">Microphone</text>
<path d="M113.3 54 h12.2 l-6.1 6.4 Z" fill="#6e6e6e"/>
<rect x="27.8" y="74.6" width="103" height="24.1" fill="#1f1f1f"/>
<text x="37.2" y="90.8" font-size="14" fill="#e8e8e8" textLength="40.4" lengthAdjust="spacingAndGlyphs">Master</text>
<path d="M113.3 83.2 h12.2 l-6.1 6.4 Z" fill="#dedede"/>
<rect x="27.8" y="220.3" width="103" height="24.3" fill="#1f1f1f"/>
<text x="37.2" y="238" font-size="14" fill="#e8e8e8" textLength="30.2" lengthAdjust="spacingAndGlyphs">Read</text>
<path d="M113.3 229.2 h12.2 l-6.1 6.4 Z" fill="#dedede"/>
<circle cx="81.1" cy="137.1" r="28.9" fill="#858585"/>
<rect x="80.4" y="109" width="1.4" height="28" fill="#1c1c1c"/>
<circle cx="81.1" cy="137.1" r="2.4" fill="#050505"/>
<text x="42.2" y="164" font-size="14" fill="#2b8cd4" textLength="6.6" lengthAdjust="spacingAndGlyphs">L</text>
<text x="112.3" y="164" font-size="14" fill="#2b8cd4" textLength="8.8" lengthAdjust="spacingAndGlyphs">R</text>
<text x="71.8" y="184.8" font-size="14" fill="#2b8cd4" textLength="19.6" lengthAdjust="spacingAndGlyphs">0.0</text>
<rect x="42.4" y="249.3" width="23.6" height="23.3" fill="#1f1f1f"/>
<text x="49.8" y="264.1" font-size="12.6" fill="#c2c2c2" textLength="9.7" lengthAdjust="spacingAndGlyphs">M</text>
<rect x="69.9" y="249.3" width="23.6" height="23.3" fill="#1f1f1f"/>
<text x="78.2" y="264.1" font-size="12.6" fill="#c2c2c2" textLength="7.3" lengthAdjust="spacingAndGlyphs">S</text>
<rect x="97.4" y="249.3" width="23.6" height="23.3" fill="#1f1f1f"/>
<text x="106.2" y="264.1" font-size="12.6" fill="#6c6c6c" textLength="7.2" lengthAdjust="spacingAndGlyphs">R</text>
<text x="37.7" y="294.7" font-size="11" fill="#9c9c9c" textLength="13" lengthAdjust="spacingAndGlyphs">dB</text>
<rect x="60.4" y="298.2" width="2.3" height="149.3" fill="#030303"/>
<rect x="56" y="303.8" width="4.3" height="1" fill="#b4b4b4"/>
<rect x="62.8" y="303.8" width="6.2" height="1" fill="#b4b4b4"/>
<rect x="56" y="372.8" width="4.3" height="1" fill="#b4b4b4"/>
<rect x="62.8" y="372.8" width="6.2" height="1" fill="#b4b4b4"/>
<rect x="56" y="395" width="4.3" height="1" fill="#b4b4b4"/>
<rect x="62.8" y="395" width="6.2" height="1" fill="#b4b4b4"/>
<rect x="56" y="415" width="4.3" height="1" fill="#b4b4b4"/>
<rect x="62.8" y="415" width="6.2" height="1" fill="#b4b4b4"/>
<rect x="56" y="431.8" width="4.3" height="1" fill="#b4b4b4"/>
<rect x="62.8" y="431.8" width="6.2" height="1" fill="#b4b4b4"/>
<rect x="56" y="439.9" width="4.3" height="1" fill="#b4b4b4"/>
<rect x="62.8" y="439.9" width="6.2" height="1" fill="#b4b4b4"/>
<rect x="59.1" y="308.8" width="1.1" height="1" fill="#b4b4b4"/>
<rect x="62.8" y="308.8" width="2.4" height="1" fill="#b4b4b4"/>
<rect x="59.1" y="314" width="1.1" height="1" fill="#b4b4b4"/>
<rect x="62.8" y="314" width="2.4" height="1" fill="#b4b4b4"/>
<rect x="59.1" y="362.9" width="1.1" height="1" fill="#b4b4b4"/>
<rect x="62.8" y="362.9" width="2.4" height="1" fill="#b4b4b4"/>
<rect x="59.1" y="367.9" width="1.1" height="1" fill="#b4b4b4"/>
<rect x="62.8" y="367.9" width="2.4" height="1" fill="#b4b4b4"/>
<rect x="62.8" y="376.5" width="2.4" height="1" fill="#b4b4b4"/>
<rect x="62.8" y="379.8" width="2.4" height="1" fill="#b4b4b4"/>
<rect x="62.8" y="384.8" width="2.4" height="1" fill="#b4b4b4"/>
<rect x="59.1" y="387.9" width="1.1" height="1" fill="#b4b4b4"/>
<rect x="62.8" y="387.9" width="2.4" height="1" fill="#b4b4b4"/>
<rect x="62.8" y="391.9" width="2.4" height="1" fill="#b4b4b4"/>
<rect x="59.1" y="402.9" width="1.1" height="1" fill="#b4b4b4"/>
<rect x="62.8" y="402.9" width="2.4" height="1" fill="#b4b4b4"/>
<rect x="62.8" y="410" width="2.4" height="1" fill="#b4b4b4"/>
<rect x="62.8" y="419.8" width="2.4" height="1" fill="#b4b4b4"/>
<rect x="59.1" y="423.7" width="1.1" height="1" fill="#b4b4b4"/>
<rect x="62.8" y="423.7" width="2.4" height="1" fill="#b4b4b4"/>
<rect x="62.8" y="426.9" width="2.4" height="1" fill="#b4b4b4"/>
<rect x="59.1" y="429" width="1.1" height="1" fill="#b4b4b4"/>
<rect x="62.8" y="429" width="2.4" height="1" fill="#b4b4b4"/>
<text x="46.6" y="308.3" font-size="11" fill="#9c9c9c" textLength="5.7" lengthAdjust="spacingAndGlyphs">6</text>
<text x="46.6" y="323" font-size="11" fill="#9c9c9c" textLength="5.7" lengthAdjust="spacingAndGlyphs">3</text>
<text x="46.6" y="342.3" font-size="11" fill="#9c9c9c" textLength="5.7" lengthAdjust="spacingAndGlyphs">0</text>
<text x="43.1" y="361" font-size="11" fill="#9c9c9c" textLength="9.2" lengthAdjust="spacingAndGlyphs">-3</text>
<text x="43.1" y="377.3" font-size="11" fill="#9c9c9c" textLength="9.2" lengthAdjust="spacingAndGlyphs">-6</text>
<text x="37.1" y="399.5" font-size="11" fill="#9c9c9c" textLength="15.2" lengthAdjust="spacingAndGlyphs">-12</text>
<text x="37.1" y="419.5" font-size="11" fill="#9c9c9c" textLength="15.2" lengthAdjust="spacingAndGlyphs">-21</text>
<text x="36" y="444.6" font-size="13" fill="#9c9c9c" textLength="14" lengthAdjust="spacingAndGlyphs">-∞</text>
<rect x="52.4" y="319.3" width="18.4" height="37.8" fill="#0e0e0e"/>
<rect x="53.3" y="320.1" width="16.6" height="5.3" fill="#8a8a8a"/>
<rect x="53.3" y="325.4" width="16.6" height="26" fill="url(#hg)"/>
<rect x="53.3" y="351.4" width="16.6" height="5.2" fill="url(#hb)"/>
<rect x="61.1" y="320.1" width="1" height="31.3" fill="rgba(0,0,0,0.045)"/>
<rect x="54" y="337.7" width="4.2" height="1.2" fill="#000"/>
<rect x="65" y="337.7" width="4.2" height="1.2" fill="#000"/>
<rect x="79" y="284" width="23.6" height="172" fill="#030303"/>
<rect x="79.6" y="284.6" width="22" height="12" fill="#111111"/>
<rect x="79.9" y="285" width="10" height="11" fill="#000"/>
<rect x="79.9" y="297" width="10" height="157.6" fill="#000"/>
<rect x="79.9" y="452.5" width="10" height="1.4" fill="#e8e010"/>
<rect x="90.95" y="285" width="10" height="11" fill="#000"/>
<rect x="90.95" y="297" width="10" height="157.6" fill="#000"/>
<rect x="90.95" y="452.5" width="10" height="1.4" fill="#e8e010"/>
<rect x="102.8" y="297.9" width="5.2" height="1" fill="#b4b4b4"/>
<text x="111.2" y="302.4" font-size="11" fill="#9c9c9c" textLength="5.8" lengthAdjust="spacingAndGlyphs">0</text>
<rect x="102.8" y="343.7" width="5.2" height="1" fill="#b4b4b4"/>
<text x="111.2" y="348.2" font-size="11" fill="#9c9c9c" textLength="15.2" lengthAdjust="spacingAndGlyphs">-36</text>
<rect x="102.8" y="389.8" width="5.2" height="1" fill="#b4b4b4"/>
<text x="111.2" y="394.3" font-size="11" fill="#9c9c9c" textLength="15.2" lengthAdjust="spacingAndGlyphs">-72</text>
<rect x="102.8" y="437.8" width="5.2" height="1" fill="#b4b4b4"/>
<text x="111.2" y="442.3" font-size="11" fill="#9c9c9c" textLength="21.2" lengthAdjust="spacingAndGlyphs">-108</text>
<rect x="102.8" y="312.5" width="2.4" height="1" fill="#b4b4b4"/>
<rect x="102.8" y="329" width="2.4" height="1" fill="#b4b4b4"/>
<rect x="102.8" y="359" width="2.4" height="1" fill="#b4b4b4"/>
<rect x="102.8" y="375" width="2.4" height="1" fill="#b4b4b4"/>
<rect x="102.8" y="406.9" width="2.4" height="1" fill="#b4b4b4"/>
<rect x="102.8" y="421.9" width="2.4" height="1" fill="#b4b4b4"/>
<rect x="102.8" y="453" width="2.4" height="1" fill="#b4b4b4"/>
<text x="111.5" y="453" font-size="11" fill="#9c9c9c" textLength="13" lengthAdjust="spacingAndGlyphs">dB</text>
<text x="40.2" y="477.1" font-size="14" fill="#2b8cd4" textLength="19.2" lengthAdjust="spacingAndGlyphs">0.0</text>
<text x="32.3" y="504.9" font-size="14" fill="#9c9c9c" textLength="15.2" lengthAdjust="spacingAndGlyphs">A5</text>
<rect x="58" y="488" width="78" height="22.6" fill="#1f1f1f"/>
<text x="74.9" y="504.9" font-size="14" fill="#dedede" textLength="45.8" lengthAdjust="spacingAndGlyphs">Audio 5</text>
</g>
<g transform="translate(593.75,0)">
<rect x="139.9" y="40.8" width="1.1" height="476" fill="#1a1a1a"/>
<text x="37.2" y="62.8" font-size="14" fill="#6e6e6e" textLength="72" lengthAdjust="spacingAndGlyphs">Microphone</text>
<path d="M113.3 54 h12.2 l-6.1 6.4 Z" fill="#6e6e6e"/>
<rect x="27.8" y="74.6" width="103" height="24.1" fill="#1f1f1f"/>
<text x="37.2" y="90.8" font-size="14" fill="#e8e8e8" textLength="40.4" lengthAdjust="spacingAndGlyphs">Master</text>
<path d="M113.3 83.2 h12.2 l-6.1 6.4 Z" fill="#dedede"/>
<rect x="27.8" y="220.3" width="103" height="24.3" fill="#1f1f1f"/>
<text x="37.2" y="238" font-size="14" fill="#e8e8e8" textLength="30.2" lengthAdjust="spacingAndGlyphs">Read</text>
<path d="M113.3 229.2 h12.2 l-6.1 6.4 Z" fill="#dedede"/>
<circle cx="81.1" cy="137.1" r="28.9" fill="#858585"/>
<rect x="80.4" y="109" width="1.4" height="28" fill="#1c1c1c"/>
<circle cx="81.1" cy="137.1" r="2.4" fill="#050505"/>
<text x="42.2" y="164" font-size="14" fill="#2b8cd4" textLength="6.6" lengthAdjust="spacingAndGlyphs">L</text>
<text x="112.3" y="164" font-size="14" fill="#2b8cd4" textLength="8.8" lengthAdjust="spacingAndGlyphs">R</text>
<text x="71.8" y="184.8" font-size="14" fill="#2b8cd4" textLength="19.6" lengthAdjust="spacingAndGlyphs">0.0</text>
<rect x="42.4" y="249.3" width="23.6" height="23.3" fill="#1f1f1f"/>
<text x="49.8" y="264.1" font-size="12.6" fill="#c2c2c2" textLength="9.7" lengthAdjust="spacingAndGlyphs">M</text>
<rect x="69.9" y="249.3" width="23.6" height="23.3" fill="#1f1f1f"/>
<text x="78.2" y="264.1" font-size="12.6" fill="#c2c2c2" textLength="7.3" lengthAdjust="spacingAndGlyphs">S</text>
<rect x="97.4" y="249.3" width="23.6" height="23.3" fill="#1f1f1f"/>
<text x="106.2" y="264.1" font-size="12.6" fill="#6c6c6c" textLength="7.2" lengthAdjust="spacingAndGlyphs">R</text>
<text x="37.7" y="294.7" font-size="11" fill="#9c9c9c" textLength="13" lengthAdjust="spacingAndGlyphs">dB</text>
<rect x="60.4" y="298.2" width="2.3" height="149.3" fill="#030303"/>
<rect x="56" y="303.8" width="4.3" height="1" fill="#b4b4b4"/>
<rect x="62.8" y="303.8" width="6.2" height="1" fill="#b4b4b4"/>
<rect x="56" y="372.8" width="4.3" height="1" fill="#b4b4b4"/>
<rect x="62.8" y="372.8" width="6.2" height="1" fill="#b4b4b4"/>
<rect x="56" y="395" width="4.3" height="1" fill="#b4b4b4"/>
<rect x="62.8" y="395" width="6.2" height="1" fill="#b4b4b4"/>
<rect x="56" y="415" width="4.3" height="1" fill="#b4b4b4"/>
<rect x="62.8" y="415" width="6.2" height="1" fill="#b4b4b4"/>
<rect x="56" y="431.8" width="4.3" height="1" fill="#b4b4b4"/>
<rect x="62.8" y="431.8" width="6.2" height="1" fill="#b4b4b4"/>
<rect x="56" y="439.9" width="4.3" height="1" fill="#b4b4b4"/>
<rect x="62.8" y="439.9" width="6.2" height="1" fill="#b4b4b4"/>
<rect x="59.1" y="308.8" width="1.1" height="1" fill="#b4b4b4"/>
<rect x="62.8" y="308.8" width="2.4" height="1" fill="#b4b4b4"/>
<rect x="59.1" y="314" width="1.1" height="1" fill="#b4b4b4"/>
<rect x="62.8" y="314" width="2.4" height="1" fill="#b4b4b4"/>
<rect x="59.1" y="362.9" width="1.1" height="1" fill="#b4b4b4"/>
<rect x="62.8" y="362.9" width="2.4" height="1" fill="#b4b4b4"/>
<rect x="59.1" y="367.9" width="1.1" height="1" fill="#b4b4b4"/>
<rect x="62.8" y="367.9" width="2.4" height="1" fill="#b4b4b4"/>
<rect x="62.8" y="376.5" width="2.4" height="1" fill="#b4b4b4"/>
<rect x="62.8" y="379.8" width="2.4" height="1" fill="#b4b4b4"/>
<rect x="62.8" y="384.8" width="2.4" height="1" fill="#b4b4b4"/>
<rect x="59.1" y="387.9" width="1.1" height="1" fill="#b4b4b4"/>
<rect x="62.8" y="387.9" width="2.4" height="1" fill="#b4b4b4"/>
<rect x="62.8" y="391.9" width="2.4" height="1" fill="#b4b4b4"/>
<rect x="59.1" y="402.9" width="1.1" height="1" fill="#b4b4b4"/>
<rect x="62.8" y="402.9" width="2.4" height="1" fill="#b4b4b4"/>
<rect x="62.8" y="410" width="2.4" height="1" fill="#b4b4b4"/>
<rect x="62.8" y="419.8" width="2.4" height="1" fill="#b4b4b4"/>
<rect x="59.1" y="423.7" width="1.1" height="1" fill="#b4b4b4"/>
<rect x="62.8" y="423.7" width="2.4" height="1" fill="#b4b4b4"/>
<rect x="62.8" y="426.9" width="2.4" height="1" fill="#b4b4b4"/>
<rect x="59.1" y="429" width="1.1" height="1" fill="#b4b4b4"/>
<rect x="62.8" y="429" width="2.4" height="1" fill="#b4b4b4"/>
<text x="46.6" y="308.3" font-size="11" fill="#9c9c9c" textLength="5.7" lengthAdjust="spacingAndGlyphs">6</text>
<text x="46.6" y="323" font-size="11" fill="#9c9c9c" textLength="5.7" lengthAdjust="spacingAndGlyphs">3</text>
<text x="46.6" y="342.3" font-size="11" fill="#9c9c9c" textLength="5.7" lengthAdjust="spacingAndGlyphs">0</text>
<text x="43.1" y="361" font-size="11" fill="#9c9c9c" textLength="9.2" lengthAdjust="spacingAndGlyphs">-3</text>
<text x="43.1" y="377.3" font-size="11" fill="#9c9c9c" textLength="9.2" lengthAdjust="spacingAndGlyphs">-6</text>
<text x="37.1" y="399.5" font-size="11" fill="#9c9c9c" textLength="15.2" lengthAdjust="spacingAndGlyphs">-12</text>
<text x="37.1" y="419.5" font-size="11" fill="#9c9c9c" textLength="15.2" lengthAdjust="spacingAndGlyphs">-21</text>
<text x="36" y="444.6" font-size="13" fill="#9c9c9c" textLength="14" lengthAdjust="spacingAndGlyphs">-∞</text>
<rect x="52.4" y="319.3" width="18.4" height="37.8" fill="#0e0e0e"/>
<rect x="53.3" y="320.1" width="16.6" height="5.3" fill="#8a8a8a"/>
<rect x="53.3" y="325.4" width="16.6" height="26" fill="url(#hg)"/>
<rect x="53.3" y="351.4" width="16.6" height="5.2" fill="url(#hb)"/>
<rect x="61.1" y="320.1" width="1" height="31.3" fill="rgba(0,0,0,0.045)"/>
<rect x="54" y="337.7" width="4.2" height="1.2" fill="#000"/>
<rect x="65" y="337.7" width="4.2" height="1.2" fill="#000"/>
<rect x="79" y="284" width="23.6" height="172" fill="#030303"/>
<rect x="79.6" y="284.6" width="22" height="12" fill="#111111"/>
<rect x="79.9" y="285" width="10" height="11" fill="#000"/>
<rect x="79.9" y="297" width="10" height="157.6" fill="#000"/>
<rect x="79.9" y="452.5" width="10" height="1.4" fill="#e8e010"/>
<rect x="90.95" y="285" width="10" height="11" fill="#000"/>
<rect x="90.95" y="297" width="10" height="157.6" fill="#000"/>
<rect x="90.95" y="452.5" width="10" height="1.4" fill="#e8e010"/>
<rect x="102.8" y="297.9" width="5.2" height="1" fill="#b4b4b4"/>
<text x="111.2" y="302.4" font-size="11" fill="#9c9c9c" textLength="5.8" lengthAdjust="spacingAndGlyphs">0</text>
<rect x="102.8" y="343.7" width="5.2" height="1" fill="#b4b4b4"/>
<text x="111.2" y="348.2" font-size="11" fill="#9c9c9c" textLength="15.2" lengthAdjust="spacingAndGlyphs">-36</text>
<rect x="102.8" y="389.8" width="5.2" height="1" fill="#b4b4b4"/>
<text x="111.2" y="394.3" font-size="11" fill="#9c9c9c" textLength="15.2" lengthAdjust="spacingAndGlyphs">-72</text>
<rect x="102.8" y="437.8" width="5.2" height="1" fill="#b4b4b4"/>
<text x="111.2" y="442.3" font-size="11" fill="#9c9c9c" textLength="21.2" lengthAdjust="spacingAndGlyphs">-108</text>
<rect x="102.8" y="312.5" width="2.4" height="1" fill="#b4b4b4"/>
<rect x="102.8" y="329" width="2.4" height="1" fill="#b4b4b4"/>
<rect x="102.8" y="359" width="2.4" height="1" fill="#b4b4b4"/>
<rect x="102.8" y="375" width="2.4" height="1" fill="#b4b4b4"/>
<rect x="102.8" y="406.9" width="2.4" height="1" fill="#b4b4b4"/>
<rect x="102.8" y="421.9" width="2.4" height="1" fill="#b4b4b4"/>
<rect x="102.8" y="453" width="2.4" height="1" fill="#b4b4b4"/>
<text x="111.5" y="453" font-size="11" fill="#9c9c9c" textLength="13" lengthAdjust="spacingAndGlyphs">dB</text>
<text x="40.2" y="477.1" font-size="14" fill="#2b8cd4" textLength="19.2" lengthAdjust="spacingAndGlyphs">0.0</text>
<text x="32.3" y="504.9" font-size="14" fill="#9c9c9c" textLength="15.2" lengthAdjust="spacingAndGlyphs">A6</text>
<rect x="58" y="488" width="78" height="22.6" fill="#1f1f1f"/>
<text x="74.9" y="504.9" font-size="14" fill="#dedede" textLength="45.8" lengthAdjust="spacingAndGlyphs">Audio 6</text>
</g>
<rect x="548.2" y="305.3" width="56.7" height="23.4" fill="#747474"/>
<rect x="548.2" y="305.3" width="55.8" height="22.5" fill="#c6c6c6"/>
<rect x="549" y="306.1" width="55.1" height="21.8" fill="#a9a9a9"/>
<text x="551" y="322.6" font-size="15" fill="#14142a" textLength="50.6" lengthAdjust="spacingAndGlyphs">Volume</text>
<text x="24.1" y="555.5" font-size="18" fill="#2d98e0" textLength="102" lengthAdjust="spacingAndGlyphs" font-weight="bold">00:00:44:05</text>
<text x="531.5" y="555.5" font-size="18" fill="#8c8c8c" textLength="102" lengthAdjust="spacingAndGlyphs" font-weight="bold">00:06:09:04</text>
<defs><linearGradient id="ig" gradientUnits="userSpaceOnUse" x1="0" y1="541" x2="0" y2="557"><stop offset="0" stop-color="#c6c6c6"/><stop offset="1" stop-color="#9a9a9a"/></linearGradient></defs>
<path d="M245.5 541 V546.1 L242.6 549 L245.5 551.9 V557.1" fill="none" stroke="url(#ig)" stroke-width="2.5" stroke-linejoin="miter"/>
<path d="M288.7 541 V546.1 L291.6 549 L288.7 551.9 V557.1" fill="none" stroke="url(#ig)" stroke-width="2.5" stroke-linejoin="miter"/>
<path d="M336.7 541 V546.1 L333.8 549 L336.7 551.9 V557.1" fill="none" stroke="url(#ig)" stroke-width="2.5" stroke-linejoin="miter"/>
<path d="M351.6 541 V546.1 L354.5 549 L351.6 551.9 V557.1" fill="none" stroke="url(#ig)" stroke-width="2.5" stroke-linejoin="miter"/>
<path d="M247.2 549.2 l6.1 -5.6 v3.2 h5 v4.7 h-5 v3.2 z" fill="url(#ig)"/>
<path d="M287 549.2 l-6.1 -5.6 v3.2 h-7 v4.7 h7 v3.2 z" fill="url(#ig)"/>
<rect x="307" y="543.9" width="11.2" height="11.1" fill="url(#ig)"/>
<path d="M340 544.2 l9 5 l-9 5 z" fill="url(#ig)"/>
<path d="M366.3 545 h5.2 v2.8 h-2.3 v5 h11.9 v-5.2 h2.9 v8.1 h-17.7 z" fill="url(#ig)"/>
<path d="M373.7 541.8 l9.6 4.2 l-9.6 4.2 z" fill="url(#ig)"/>
<circle cx="406.3" cy="549.2" r="6.3" fill="#702a2a"/>
</svg>
</body></html>
